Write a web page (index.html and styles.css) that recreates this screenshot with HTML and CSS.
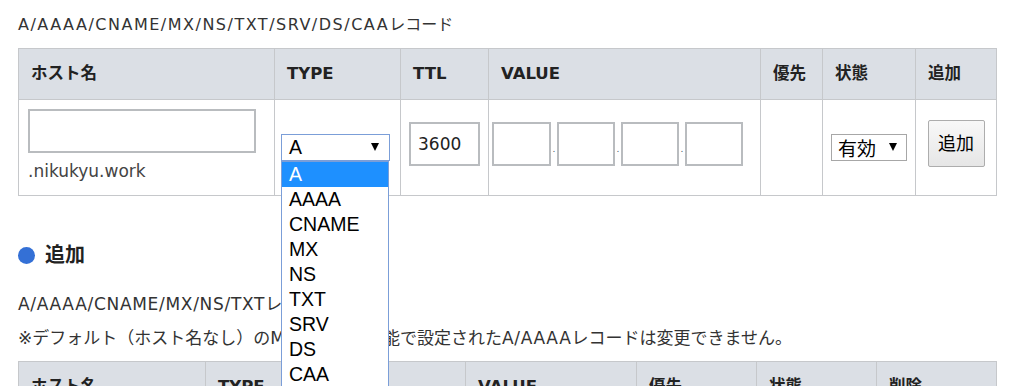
FILE: index.html
```html
<!DOCTYPE html>
<html lang="ja">
<head>
<meta charset="utf-8">
<title>DNSレコード設定</title>
<link rel="stylesheet" href="styles.css">
</head>
<body>
<main class="page">
  <p class="lead"><span class="en">A/AAAA/CNAME/MX/NS/TXT/SRV/DS/CAA</span>レコード</p>

  <table class="grid grid-add">
    <colgroup>
      <col class="c-host"><col class="c-type"><col class="c-ttl"><col class="c-value"><col class="c-prio"><col class="c-state"><col class="c-act">
    </colgroup>
    <thead>
      <tr><th>ホスト名</th><th>TYPE</th><th>TTL</th><th>VALUE</th><th>優先</th><th>状態</th><th>追加</th></tr>
    </thead>
    <tbody>
      <tr>
        <td class="cell-host">
          <input class="field field-host" type="text">
          <div class="suffix">.nikukyu.work</div>
        </td>
        <td class="cell-type">
          <div class="select select-type">
            <span class="select-value">A</span>
            <ul class="options">
              <li class="is-active">A</li>
              <li>AAAA</li>
              <li>CNAME</li>
              <li>MX</li>
              <li>NS</li>
              <li>TXT</li>
              <li>SRV</li>
              <li>DS</li>
              <li>CAA</li>
            </ul>
          </div>
        </td>
        <td class="cell-mid"><input class="field field-ttl" type="text" value="3600"></td>
        <td class="cell-value">
          <div class="ip">
            <input class="field field-oct" type="text"><span class="ip-dot">.</span><input class="field field-oct" type="text"><span class="ip-dot">.</span><input class="field field-oct" type="text"><span class="ip-dot">.</span><input class="field field-oct" type="text">
          </div>
        </td>
        <td class="cell-mid"></td>
        <td class="cell-mid">
          <div class="select select-state"><span class="select-value">有効</span></div>
        </td>
        <td class="cell-mid"><button class="btn" type="button">追加</button></td>
      </tr>
    </tbody>
  </table>

  <h2 class="section-title"><span class="mark"></span>追加</h2>
  <p class="note note-first"><span class="en">A/AAAA/CNAME/MX/NS/TXT</span>レコード</p>
  <p class="note">※デフォルト（ホスト名なし）の<span class="en">MX</span>とメール機能で設定された<span class="en">A/AAAA</span>レコードは変更できません。</p>

  <table class="grid grid-list">
    <colgroup>
      <col class="l-host"><col class="l-type"><col class="l-ttl"><col class="l-value"><col class="l-prio"><col class="l-state"><col class="l-act">
    </colgroup>
    <thead>
      <tr><th>ホスト名</th><th>TYPE</th><th>TTL</th><th>VALUE</th><th>優先</th><th>状態</th><th>削除</th></tr>
    </thead>
  </table>
</main>
</body>
</html>
```

FILE: styles.css
```css
* {
  box-sizing: border-box;
}

html {
  background: #ffffff;
}

body {
  margin: 0;
  color: #333333;
  font-family: "DejaVu Sans", "Noto Sans CJK JP", sans-serif;
  font-size: 16px;
}

.page {
  padding: 13px 20px 0 18px;
}

.lead,
.note {
  margin: 0;
  line-height: 24px;
}

.lead .en {
  letter-spacing: 1.5px;
}

.note {
  font-size: 17px;
}

.note .en {
  letter-spacing: 0.7px;
}

/* tables */
.grid {
  width: 978px;
  border-collapse: collapse;
  table-layout: fixed;
  margin-top: 11px;
}

.grid th,
.grid td {
  border: 1px solid #c6c8cb;
}

.grid th {
  background: #dbdfe5;
  color: #222222;
  text-align: left;
  font-weight: 700;
  font-size: 16.5px;
  line-height: 24px;
  padding: 13px 12px;
}

.c-host { width: 256px; }
.c-type { width: 126px; }
.c-ttl { width: 88px; }
.c-value { width: 272px; }
.c-prio { width: 62px; }
.c-state { width: 93px; }
.c-act { width: 81px; }

.l-host { width: 187px; }
.l-type { width: 130px; }
.l-ttl { width: 130px; }
.l-value { width: 171px; }
.l-prio { width: 120px; }
.l-state { width: 120px; }
.l-act { width: 120px; }

.grid td {
  vertical-align: middle;
  padding: 0 6px;
}

.grid td.cell-host {
  padding: 9px 9px 12px;
}

.grid td.cell-type {
  padding: 0 6px;
}

.grid td.cell-value {
  padding: 0 3px;
}

/* inputs */
.field {
  display: block;
  height: 44px;
  border: 2px solid #b9bcbf;
  border-radius: 0;
  background: #ffffff;
  padding: 0 7px;
  font-family: "DejaVu Sans", "Noto Sans CJK JP", sans-serif;
  font-size: 17px;
  color: #222222;
  outline: none;
}

.field-host {
  width: 228px;
  margin-bottom: 6px;
}

.suffix {
  font-size: 17px;
  line-height: 24px;
  color: #444444;
}

.field-ttl {
  width: 71px;
  margin: 0 auto 7px;
}

.ip {
  display: flex;
  align-items: center;
  margin-bottom: 7px;
}

.field-oct {
  width: 58px;
}

.field-oct:first-child {
  width: 59px;
}

.ip-dot {
  width: 6px;
  margin-top: 10px;
  text-align: center;
  font-size: 9px;
  line-height: 10px;
  color: #445566;
}

/* fake selects */
.select {
  position: relative;
  height: 27px;
  background: #ffffff;
  color: #000000;
  text-align: left;
}

.select::after {
  content: "";
  position: absolute;
  top: 8px;
  border-left: 4.5px solid transparent;
  border-right: 4.5px solid transparent;
  border-top: 8px solid #000000;
}

.select-type {
  width: 109px;
  border: 1px solid #7b9ed8;
  padding-left: 7px;
  font-family: "Liberation Sans", Arial, sans-serif;
  font-size: 19.5px;
  line-height: 25px;
}

.select-type::after {
  right: 10px;
}

.select-state {
  width: 76px;
  margin: 0 auto;
  border: 1px solid #a7a7a7;
  padding-left: 6px;
  font-family: "Noto Sans CJK JP", sans-serif;
  font-size: 19px;
  line-height: 25px;
}

.select-state::after {
  right: 9px;
}

.options {
  position: absolute;
  z-index: 5;
  left: -1px;
  top: 26px;
  width: 108px;
  margin: 0;
  padding: 0;
  list-style: none;
  background: #ffffff;
  border: 1px solid #7b9ed8;
}

.options li {
  height: 25px;
  line-height: 25px;
  padding-left: 7px;
  color: #000000;
}

.options li.is-active {
  background: #1e90ff;
  color: #ffffff;
}

/* button */
.btn {
  display: block;
  margin: 0 auto 8px;
  width: 57px;
  height: 47px;
  padding: 0 0 3px;
  border: 1px solid #adadad;
  border-radius: 2px;
  background: linear-gradient(#f8f8f8, #e6e6e6);
  font-family: "Noto Sans CJK JP", sans-serif;
  font-size: 18px;
  color: #000000;
}

/* section */
.section-title {
  display: flex;
  align-items: center;
  gap: 10px;
  margin: 44px 0 0;
  font-size: 20px;
  line-height: 30px;
  font-weight: 700;
  color: #222222;
}

.mark {
  width: 17px;
  height: 17px;
  border-radius: 50%;
  background: #3470d6;
}

.note-first {
  margin-top: 22px;
}

.note + .note {
  margin-top: 10px;
}
```
